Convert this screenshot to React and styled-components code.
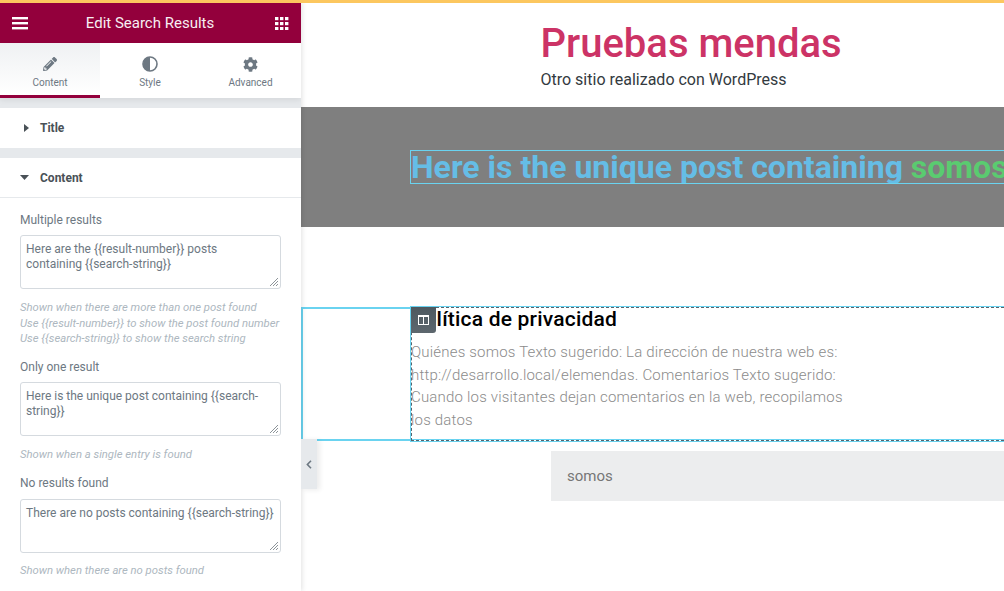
import React from "react";
import styled, { createGlobalStyle } from "styled-components";
import { FaPencilAlt, FaCog } from "react-icons/fa";

const Global = createGlobalStyle`
  html, body { margin: 0; padding: 0; background: #fff; }
  * { box-sizing: border-box; }
  body { font-family: Roboto, "Liberation Sans", sans-serif; }
`;

const Page = styled.div`
  width: 1004px; height: 591px; overflow: hidden; position: relative;
  display: flex; flex-direction: column;
  border-top: 3px solid #fcc75f;
`;
const Columns = styled.div`display: flex; flex: 1; min-height: 0;`;

const Panel = styled.aside`
  width: 301px; flex: none; background: #fff; display: flex; flex-direction: column;
  box-shadow: 1px 0 5px rgba(0,0,0,.12); position: relative; z-index: 2; overflow: hidden;
`;
const TopBar = styled.header`
  height: 40px; flex: none; background: #93003c; color: #fff;
  display: flex; align-items: center; justify-content: space-between;
  padding: 0 12px;
`;
const TopTitle = styled.div`font-size: 15px; color: #f7eef2; margin-left: -3px;`;
const Tabs = styled.nav`
  display: grid; grid-template-columns: 100px 100px 101px; height: 55px; flex: none;
  background: #fff; box-shadow: 0 2px 6px rgba(0,0,0,.08); position: relative; z-index: 1;
`;
const Tab = styled.div`
  display: flex; flex-direction: column; align-items: center; padding-top: 13px; gap: 5px;
  font-size: 10px; color: #6d7882; height: 55px;
  background: ${p => (p.$active ? "linear-gradient(#eff1f3,#fff)" : "transparent")};
  border-bottom: ${p => (p.$active ? "3px solid #93003c" : "0")};
  svg { display: block; }
`;
const TabIcon = styled.div`height: 16px; display: flex; align-items: center; color: #6d7882;`;
const Body = styled.div`flex: 1; background: #e6e9ec; padding-top: 10px; display: flex; flex-direction: column; gap: 10px;`;
const Section = styled.section`background: #fff;`;
const SectionHead = styled.div`
  height: 40px; display: flex; align-items: center; gap: 11px; padding-left: ${p => (p.$open ? "20px" : "24px")};
  font-size: 12px; font-weight: 700; color: #495157;
  border-bottom: ${p => (p.$open ? "1px solid #e6e9ec" : "0")};
`;
const Controls = styled.div`padding: 15px 20px 0; height: 394px;`;
const Label = styled.div`font-size: 12px; color: #6d7882; line-height: 15px;`;
const AreaBox = styled.div`
  position: relative; margin-top: ${p => (p.$first ? 7 : 8)}px; height: 54px; width: 261px;
  border: 1px solid #d5dadf; border-radius: 3px; padding: 6px 5px 5px;
  font-size: 12px; line-height: 15px; color: #6d7882;
  svg { position: absolute; right: 1px; bottom: 1px; }
`;
const Help = styled.div`
  margin-top: ${p => (p.$tight ? 10 : 11)}px; font-size: 11.3px; font-style: italic; line-height: 15.7px; color: #adb7c0; white-space: nowrap;
`;
const Spaced = styled.div`margin-top: ${p => p.$m}px;`;

const Collapse = styled.div`
  position: absolute; left: 301px; top: 436px; width: 16px; height: 50px; background: #e6e9ec;
  box-shadow: 3px 1px 5px rgba(0,0,0,.08); display: flex; align-items: center; justify-content: center; z-index: 3;
`;

const Preview = styled.main`flex: 1; min-width: 0; display: flex; flex-direction: column; overflow: hidden;`;
const SiteHeader = styled.div`height: 104px; padding: 17px 0 0 239.5px; flex: none;`;
const SiteTitle = styled.div`font-size: 40px; line-height: 47px; color: #cc3366; font-weight: 500; white-space: nowrap;`;
const Tagline = styled.div`font-size: 16px; line-height: 20px; margin-top: 3px; color: #333a40;`;
const Band = styled.div`height: 120px; background: #7f7f7f; flex: none; padding: 43px 0 0 109px;`;
const ResultTitle = styled.h1`
  margin: 0; height: 34px; border: 1px solid #6ad3f0; border-right: 0; font-size: 32px; line-height: 33px; font-weight: 700;
  color: #65bde6; white-space: nowrap; overflow: hidden;
  span { color: #5acb70; }
`;
const Gap = styled.div`height: 80px; flex: none;`;
const PostRow = styled.div`
  height: 134px; flex: none; display: flex; position: relative;
  border: 2px solid #6ad3f0; border-right: 0;
`;
const Empty = styled.div`width: 107px; flex: none;`;
const PostCol = styled.div`
  flex: 1; position: relative; margin: -2px 0 -2px 1px; min-width: 0;
  border: 1px dashed #55636c; border-right: 0; background: #fff;
  box-shadow: 0 0 0 1px #6ad3f0, inset 0 -1px 0 #6ad3f0;
`;
const Handle = styled.div`
  position: absolute; left: -1px; top: -1px; width: 25px; height: 26px; background: linear-gradient(#4d5960,#5d676e);
  border-radius: 0 0 3px 0; display: flex; align-items: center; justify-content: center; z-index: 2;
`;
const PostTitle = styled.h2`
  margin: -1px 0 0 -1px; font-size: 21px; line-height: 25px; font-weight: 500; color: #000; white-space: nowrap;
  letter-spacing: .2px;
`;
const PostText = styled.p`
  margin: 9px 0 0 -1px; width: 440px; font-size: 15px; line-height: 22.7px; color: #8b8b8b; font-weight: 300; letter-spacing: .19px;
`;
const Search = styled.div`
  margin: 10px 0 0 250px; height: 50px; background: #ecedee; padding: 0 16px; display: flex; align-items: center;
  font-size: 15px; color: #767676; flex: none;
`;

const Burger = () => (
  <svg width="16" height="13" viewBox="0 0 16 13" fill="#fff">
    <rect y="0" width="16" height="2.4" /><rect y="5" width="16" height="2.4" /><rect y="10" width="16" height="2.4" />
  </svg>
);
const Dots = () => (
  <svg width="14" height="13" viewBox="0 0 14 13" fill="#fff">
    {[0, 5, 10].flatMap(y => [0, 5, 10].map(x => <rect key={`${x}-${y}`} x={x} y={y} width="3.4" height="3.2" />))}
  </svg>
);
const Half = () => (
  <svg width="16" height="16" viewBox="0 0 16 16">
    <circle cx="8" cy="8" r="7" fill="none" stroke="#6d7882" strokeWidth="1.6" />
    <path d="M8 1a7 7 0 0 0 0 14z" fill="#6d7882" />
  </svg>
);
const Caret = ({ open }) => open
  ? <svg width="9" height="5" viewBox="0 0 9 5" fill="#495157"><path d="M0 0h9L4.5 5z" /></svg>
  : <svg width="5" height="8" viewBox="0 0 5 8" fill="#495157"><path d="M0 0l5 4-5 4z" /></svg>;
const Grip = () => (
  <svg width="11" height="11" viewBox="0 0 11 11">
    <path d="M10 2L2 10M10 5L5 10M10 8L8 10" stroke="#8d9499" strokeWidth="1" />
  </svg>
);
const ColumnsIcon = () => (
  <svg width="11" height="10" viewBox="0 0 11 10" fill="none" stroke="#fff">
    <rect x=".5" y=".5" width="10" height="9" /><path d="M5.5 .5v9" /><path d="M.5 1.5h10" />
  </svg>
);

const Area = ({ children, first }) => <AreaBox $first={first}>{children}<Grip /></AreaBox>;

export default function App() {
  return (
    <Page>
      <Global />
      <Columns>
        <Panel>
          <TopBar>
            <Burger />
            <TopTitle>Edit Search Results</TopTitle>
            <Dots />
          </TopBar>
          <Tabs>
            <Tab $active><TabIcon><FaPencilAlt size={14} /></TabIcon>Content</Tab>
            <Tab><TabIcon><Half /></TabIcon>Style</Tab>
            <Tab><TabIcon><FaCog size={15} /></TabIcon>Advanced</Tab>
          </Tabs>
          <Body>
            <Section><SectionHead><Caret />Title</SectionHead></Section>
            <Section>
              <SectionHead $open><Caret open />Content</SectionHead>
              <Controls>
                <Label>Multiple results</Label>
                <Area first>Here are the {"{{result-number}}"} posts containing {"{{search-string}}"}</Area>
                <Help>
                  Shown when there are more than one post found<br />
                  Use {"{{result-number}}"} to show the post found number<br />
                  Use {"{{search-string}}"} to show the search string
                </Help>
                <Spaced $m={13}><Label>Only one result</Label></Spaced>
                <Area first>Here is the unique post containing {"{{search-string}}"}</Area>
                <Help>Shown when a single entry is found</Help>
                <Spaced $m={13}><Label>No results found</Label></Spaced>
                <Area>There are no posts containing {"{{search-string}}"}</Area>
                <Help $tight>Shown when there are no posts found</Help>
              </Controls>
            </Section>
          </Body>
        </Panel>
        <Preview>
          <SiteHeader>
            <SiteTitle>Pruebas mendas</SiteTitle>
            <Tagline>Otro sitio realizado con WordPress</Tagline>
          </SiteHeader>
          <Band>
            <ResultTitle>Here is the unique post containing <span>somos</span></ResultTitle>
          </Band>
          <Gap />
          <PostRow>
            <Empty />
            <PostCol>
              <Handle><ColumnsIcon /></Handle>
              <PostTitle>Política de privacidad</PostTitle>
              <PostText>
                Quiénes somos Texto sugerido: La dirección de nuestra web es: http://desarrollo.local/elemendas. Comentarios Texto sugerido: Cuando los visitantes dejan comentarios en la web, recopilamos los datos
              </PostText>
            </PostCol>
          </PostRow>
          <Search>somos</Search>
        </Preview>
      </Columns>
      <Collapse>
        <svg width="6" height="9" viewBox="0 0 6 9" fill="none" stroke="#6d7882" strokeWidth="1.6"><path d="M5 .8L1.4 4.5 5 8.2" /></svg>
      </Collapse>
    </Page>
  );
}
